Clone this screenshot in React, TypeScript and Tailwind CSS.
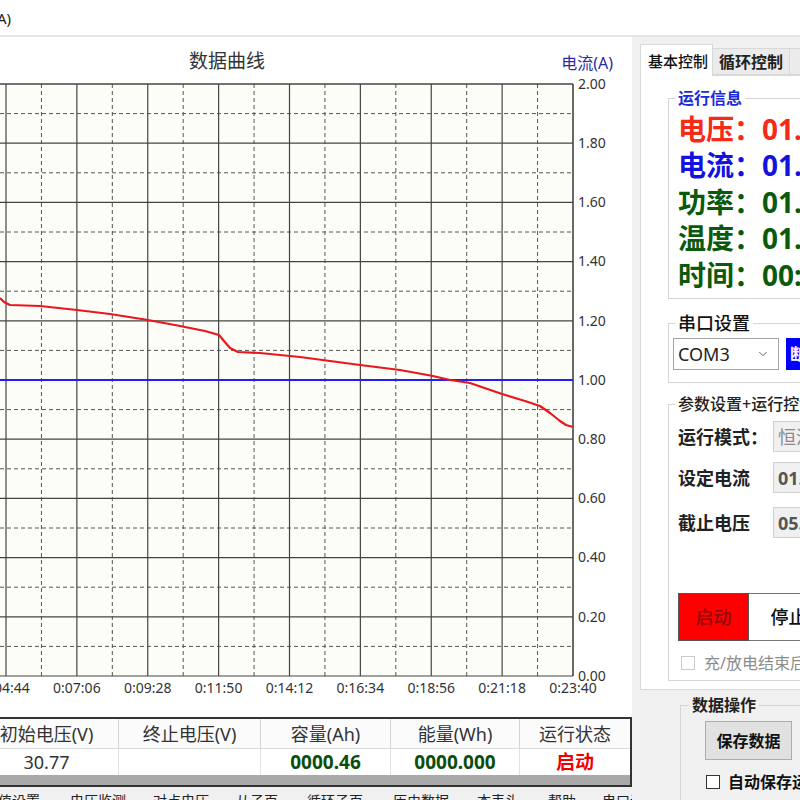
import React from "react";
import { ChevronDown } from "lucide-react";

// plot geometry (svg starts at page y = 80)
const hStep = 59.2;
const vStep = 70.875;
const x0 = 6;
const top = 4;
const right = 573;
const bottom = top + hStep * 10;

const yLabels = ["2.00", "1.80", "1.60", "1.40", "1.20", "1.00", "0.80", "0.60", "0.40", "0.20", "0.00"];
const tLabels = ["0:04:44", "0:07:06", "0:09:28", "0:11:50", "0:14:12", "0:16:34", "0:18:56", "0:21:18", "0:23:40"];

// page coordinates of the current curve
const curve: [number, number][] = [
  [0, 298], [4, 302], [10, 305], [40, 306], [77, 310], [110, 314], [148, 320],
  [180, 326], [205, 331], [219, 335], [224, 341], [230, 348], [238, 352],
  [260, 353], [300, 357], [360, 365], [400, 370], [433, 376], [450, 380],
  [470, 383], [502, 394], [525, 401], [540, 406], [550, 413], [560, 421],
  [566, 425], [573, 427],
];

function Chart() {
  const d = curve.map(([x, y], i) => `${i ? "L" : "M"}${x} ${y - 80}`).join(" ");
  return (
    <svg width={632} height={637} className="block shrink-0 overflow-visible">
      <rect x={0} y={top} width={right} height={bottom - top} fill="#fdfdf7" />
      {Array.from({ length: 10 }).map((_, k) => (
        <line key={"hd" + k} x1={0} x2={right} y1={top + (k + 0.5) * hStep} y2={top + (k + 0.5) * hStep} stroke="#555" strokeDasharray="4 3" />
      ))}
      {Array.from({ length: 8 }).map((_, j) => (
        <line key={"vd" + j} x1={x0 + (j + 0.5) * vStep} x2={x0 + (j + 0.5) * vStep} y1={top} y2={bottom} stroke="#555" strokeDasharray="4 3" />
      ))}
      {Array.from({ length: 11 }).map((_, k) => (
        <line key={"hs" + k} x1={0} x2={right} y1={top + k * hStep} y2={top + k * hStep} stroke="#444" strokeWidth={k === 0 ? 1.6 : 1.2} />
      ))}
      {Array.from({ length: 9 }).map((_, j) => (
        <line key={"vs" + j} x1={x0 + j * vStep} x2={x0 + j * vStep} y1={top} y2={bottom} stroke="#444" strokeWidth={j === 8 ? 1.6 : 1.2} />
      ))}
      <line x1={0} x2={right} y1={300} y2={300} stroke="#1f1fff" strokeWidth={2} />
      <path d={d} fill="none" stroke="#e8171c" strokeWidth={2.2} strokeLinejoin="round" />
      {yLabels.map((l, k) => (
        <text key={l} x={578} y={top + k * hStep + 1} dominantBaseline="middle" fontSize={14} fill="#333">
          {l}
        </text>
      ))}
      {tLabels.map((l, j) => (
        <text key={l} x={x0 + j * vStep} y={609} textAnchor="middle" dominantBaseline="middle" fontSize={14} fill="#333">
          {l}
        </text>
      ))}
    </svg>
  );
}

function DataTable() {
  const cols = [
    { w: "w-[144px]", head: "初始电压(V)", val: "30.77", cls: "text-[18px] text-[#333]" },
    { w: "w-[142px]", head: "终止电压(V)", val: "", cls: "" },
    { w: "w-[130px]", head: "容量(Ah)", val: "0000.46", cls: "text-[19px] font-bold text-[#0b4d0b]" },
    { w: "w-[129px]", head: "能量(Wh)", val: "0000.000", cls: "text-[19px] font-bold text-[#0b4d0b]" },
    { w: "w-[110px]", head: "运行状态", val: "启动", cls: "text-[19px] font-bold text-[#f00000]" },
  ];
  return (
    <div className="-ml-[25px] w-[657px] h-[70px] shrink-0 border-t-2 border-r-2 border-b-2 border-[#333] flex flex-col bg-white">
      <div className="flex h-[30px] shrink-0 border-b border-[#dcdcdc] bg-[#fbfbfb]">
        {cols.map((c, i) => (
          <div key={c.head} className={`${c.w} flex items-center justify-center text-[18px] leading-[22px] text-[#333] ${i < 4 ? "border-r border-[#d4d4d4]" : ""}`}>
            {c.head}
          </div>
        ))}
      </div>
      <div className="flex h-[26px] shrink-0">
        {cols.map((c, i) => (
          <div key={c.head} className={`${c.w} flex items-center justify-center leading-[22px] ${c.cls} ${i < 4 ? "border-r border-[#e2e2e2]" : ""}`}>
            {c.val}
          </div>
        ))}
      </div>
      <div className="flex-1 bg-[#a9a9a9]" />
    </div>
  );
}

function BottomStrip() {
  const items = [
    { w: "w-[86px]", t: "数值设置" },
    { w: "w-[83px]", t: "电压监测" },
    { w: "w-[83px]", t: "对点电压" },
    { w: "w-[71px]", t: "从子页" },
    { w: "w-[86px]", t: "循环子页" },
    { w: "w-[84px]", t: "历史数据" },
    { w: "w-[71px]", t: "本表头" },
    { w: "w-[54px]", t: "帮助" },
    { w: "w-[80px]", t: "串口调试" },
  ];
  return (
    <div className="-ml-[16px] flex h-[24px] shrink-0 pt-[4px] whitespace-nowrap text-[14px] leading-[20px] text-[#222]">
      {items.map((it) => (
        <div key={it.t} className={`${it.w} shrink-0`}>
          {it.t}
        </div>
      ))}
    </div>
  );
}

function InfoLine({ label, value, color }: { label: string; value: string; color: string }) {
  return (
    <div className={`whitespace-nowrap text-[28px] font-bold leading-[36.4px] ${color}`}>
      {label}：{value}
    </div>
  );
}

function ParamRow({ label, value, valueCls, mt }: { label: string; value: string; valueCls: string; mt: string }) {
  return (
    <div className={`flex items-center ${mt}`}>
      <div className="w-[95px] shrink-0 text-[18px] font-bold leading-[24px] text-[#222]">{label}</div>
      <div className={`w-[90px] h-[31px] shrink-0 border border-[#cfcfcf] bg-[#f0f0f0] flex items-center pl-[4px] text-[18px] leading-[24px] ${valueCls}`}>
        {value}
      </div>
    </div>
  );
}

function ControlPanel() {
  return (
    <div className="flex-1 flex flex-col pt-[7px] pl-[8px] bg-[#f0f0f0]">
      <div className="flex items-end h-[31px] w-[200px] shrink-0">
        <div className="relative z-10 -mb-px w-[73px] h-[32px] bg-white border border-b-0 border-[#d9d9d9] flex items-center pl-[7px] text-[15px] font-medium leading-[20px] text-[#111]">
          基本控制
        </div>
        <div className="w-[77px] h-[27px] bg-[#ebebeb] border border-l-0 border-[#d9d9d9] flex items-center justify-center text-[16px] font-bold leading-[20px] text-[#222]">
          循环控制
        </div>
        <div className="w-[40px] h-[27px] bg-[#ebebeb] border border-l-0 border-[#d9d9d9]" />
      </div>
      <div className="h-[615px] w-[220px] shrink-0 bg-white border border-[#d9d9d9] pl-[27px] pt-[12px]">
        <fieldset className="w-[200px] border border-[#d5d5d5] pl-[9px] pt-[3px] pb-[5px]">
          <legend className="-ml-[3px] px-[3px] text-[16px] font-bold leading-[20px] text-[#1c2bd8]">运行信息</legend>
          <InfoLine label="电压" value="01.28V" color="text-[#f52a17]" />
          <InfoLine label="电流" value="01.00A" color="text-[#1313e0]" />
          <InfoLine label="功率" value="01.28W" color="text-[#0b5a0b]" />
          <InfoLine label="温度" value="01.5℃" color="text-[#0b5a0b]" />
          <InfoLine label="时间" value="00:23:40" color="text-[#0b5a0b]" />
        </fieldset>

        <fieldset className="mt-[13px] w-[200px] border border-[#d5d5d5] pl-[4px] pt-[4px] pb-[12px]">
          <legend className="ml-[2px] px-[3px] text-[18px] font-medium leading-[22px] text-[#111]">串口设置</legend>
          <div className="flex">
            <div className="w-[106px] h-[32px] shrink-0 border border-[#a3a3a3] bg-white flex items-center justify-between pl-[4px] pr-[8px] text-[18px] leading-[24px] text-[#222]">
              COM3
              <ChevronDown size={14} strokeWidth={1.5} className="text-[#555]" />
            </div>
            <div className="ml-[7px] w-[80px] h-[32px] shrink-0 bg-[#0000ff] flex items-center pl-[4px] text-[16px] font-bold leading-[20px] text-white whitespace-nowrap">
              断开串口
            </div>
          </div>
        </fieldset>

        <fieldset className="mt-[11px] w-[200px] border border-[#d5d5d5] pl-[9px] pt-[7px] pb-[7px]">
          <legend className="-ml-[3px] px-[3px] text-[16px] font-medium leading-[20px] text-[#222] whitespace-nowrap">参数设置+运行控制</legend>
          <ParamRow label="运行模式：" value="恒流放电" valueCls="text-[#8a8a8a] whitespace-nowrap overflow-hidden" mt="" />
          <ParamRow label="设定电流" value="01.00" valueCls="font-bold text-[#555]" mt="mt-[10px]" />
          <ParamRow label="截止电压" value="05.00" valueCls="font-bold text-[#555]" mt="mt-[14px]" />
          <div className="flex mt-[55px] h-[48px]">
            <div className="w-[71px] shrink-0 bg-[#ff0000] border border-[#555] flex items-center justify-center text-[18px] font-medium leading-[24px] text-[#8c0a0a]">
              启动
            </div>
            <div className="w-[80px] shrink-0 bg-white border border-l-0 border-[#777] flex items-center justify-center text-[18px] font-medium leading-[24px] text-[#111]">
              停止
            </div>
          </div>
          <div className="flex items-center mt-[12px] pl-[3px]">
            <div className="w-[14px] h-[14px] shrink-0 border border-[#cbcbcb] bg-white" />
            <div className="ml-[9px] text-[16px] leading-[20px] text-[#8c8c8c] whitespace-nowrap">充/放电结束后自动保存</div>
          </div>
        </fieldset>
      </div>

      <div className="pl-[40px] mt-[5px] shrink-0">
        <fieldset className="w-[200px] border border-[#d5d5d5] pl-[24px] pt-[6px] pb-[10px]">
          <legend className="-ml-[16px] px-[3px] text-[16px] font-bold leading-[20px] text-[#222]">数据操作</legend>
          <div className="w-[87px] h-[39px] bg-[#e1e1e1] border border-[#adadad] flex items-center justify-center text-[16px] font-bold leading-[20px] text-[#111]">
            保存数据
          </div>
          <div className="flex items-center mt-[12px] pl-[1px]">
            <div className="w-[14px] h-[14px] shrink-0 border border-[#333] bg-white" />
            <div className="ml-[8px] text-[16px] font-bold leading-[20px] text-[#111] whitespace-nowrap">自动保存运行数据</div>
          </div>
        </fieldset>
      </div>
    </div>
  );
}

export default function App() {
  return (
    <div className="w-[800px] h-[800px] overflow-hidden bg-[#f0f0f0] flex flex-col font-['Noto_Sans','Noto_Sans_CJK_SC',sans-serif]">
      <div className="h-[37px] shrink-0 bg-white border-b-2 border-[#e6e6e6] flex items-center">
        <span className="-ml-[3px] text-[15px] leading-[20px] text-[#222]">A)</span>
      </div>
      <div className="flex flex-1 min-h-0">
        <div className="w-[632px] shrink-0 flex flex-col">
          <div className="h-[680px] shrink-0 bg-white flex flex-col">
            <div className="h-[43px] shrink-0 pt-[5px] flex items-center">
              <div className="ml-[189px] text-[19px] leading-[24px] text-[#333]">数据曲线</div>
              <div className="ml-auto mr-[19px] mt-[4px] text-[16px] leading-[20px] text-[#2b2ba3]">电流(A)</div>
            </div>
            <Chart />
          </div>
          <DataTable />
          <BottomStrip />
        </div>
        <ControlPanel />
      </div>
    </div>
  );
}
